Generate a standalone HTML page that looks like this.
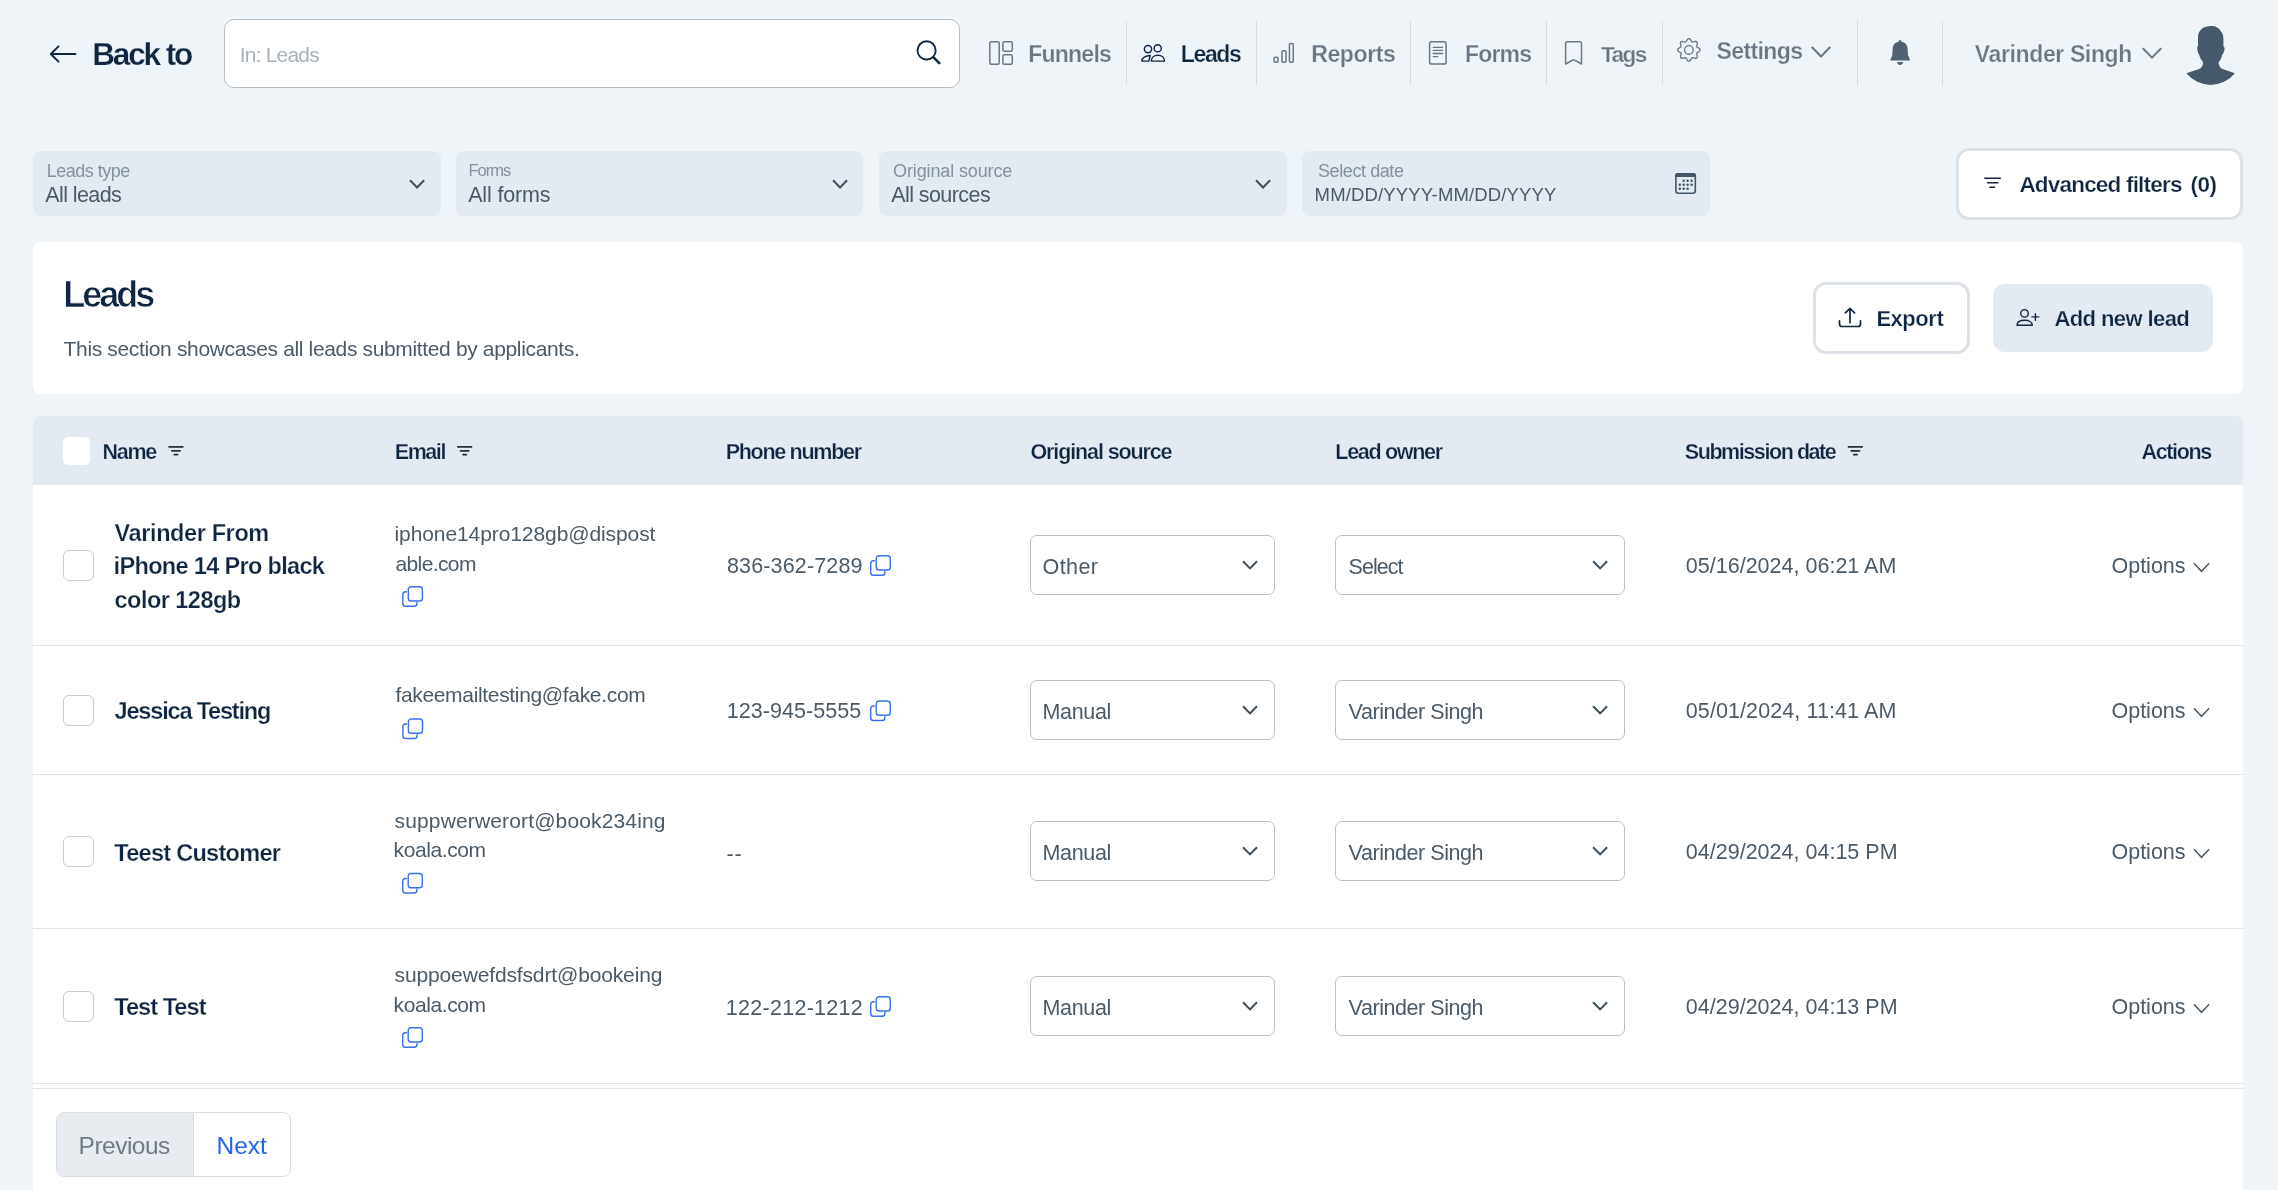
<!DOCTYPE html>
<html><head><meta charset="utf-8"><title>Leads</title>
<style>
html,body{margin:0;padding:0;}
body{width:2278px;height:1190px;overflow:hidden;position:relative;background:#eff4f8;font-family:"Liberation Sans",sans-serif;}
.b{position:absolute;box-sizing:border-box;}
.t{position:absolute;white-space:nowrap;font-family:"Liberation Sans",sans-serif;}
svg.ov{position:absolute;left:0;top:0;}
</style></head><body>
<div class="b" style="left:224px;top:19px;width:736px;height:69px;background:#fff;border:1px solid #b4bcc4;border-radius:10px;"></div>
<div class="b" style="left:1126px;top:21px;width:1px;height:64px;background:#d9dde2;"></div>
<div class="b" style="left:1256px;top:21px;width:1px;height:64px;background:#d9dde2;"></div>
<div class="b" style="left:1410px;top:21px;width:1px;height:64px;background:#d9dde2;"></div>
<div class="b" style="left:1546px;top:21px;width:1px;height:64px;background:#d9dde2;"></div>
<div class="b" style="left:1662px;top:21px;width:1px;height:64px;background:#d9dde2;"></div>
<div class="b" style="left:1857px;top:19px;width:1px;height:67px;background:#d9dde2;"></div>
<div class="b" style="left:1942px;top:21px;width:1px;height:65px;background:#d9dde2;"></div>
<div class="b" style="left:33px;top:151px;width:408px;height:65px;background:#e4eaf1;border-radius:8px;"></div>
<div class="b" style="left:456px;top:151px;width:407px;height:65px;background:#e4eaf1;border-radius:8px;"></div>
<div class="b" style="left:879px;top:151px;width:408px;height:65px;background:#e4eaf1;border-radius:8px;"></div>
<div class="b" style="left:1302px;top:151px;width:408px;height:65px;background:#e4eaf1;border-radius:8px;"></div>
<div class="b" style="left:1956px;top:148px;width:287px;height:72px;background:#fff;border:3px solid #dde2e8;border-radius:13px;"></div>
<div class="b" style="left:33px;top:242px;width:2210px;height:152px;background:#fff;border-radius:8px;"></div>
<div class="b" style="left:1813px;top:282px;width:157px;height:72px;background:#fff;border:3px solid #dde2e8;border-radius:13px;"></div>
<div class="b" style="left:1993px;top:284px;width:220px;height:68px;background:#e4eaf1;border-radius:12px;"></div>
<div class="b" style="left:33px;top:485px;width:2210px;height:705px;background:#fff;"></div>
<div class="b" style="left:33px;top:416px;width:2210px;height:69px;background:#e4eaf1;border-radius:8px 8px 0 0;"></div>
<div class="b" style="left:33px;top:645px;width:2210px;height:1px;background:#dfe4ea;"></div>
<div class="b" style="left:33px;top:774px;width:2210px;height:1px;background:#dfe4ea;"></div>
<div class="b" style="left:33px;top:928px;width:2210px;height:1px;background:#dfe4ea;"></div>
<div class="b" style="left:33px;top:1083px;width:2210px;height:1px;background:#dfe4ea;"></div>
<div class="b" style="left:33px;top:1088px;width:2210px;height:1px;background:#dfe4ea;"></div>
<div class="b" style="left:63px;top:437px;width:27px;height:28px;background:#fff;border-radius:5px;"></div>
<div class="b" style="left:63px;top:550px;width:31px;height:31px;background:#fff;border:1px solid #c8cdd2;border-radius:6px;"></div>
<div class="b" style="left:63px;top:695px;width:31px;height:31px;background:#fff;border:1px solid #c8cdd2;border-radius:6px;"></div>
<div class="b" style="left:63px;top:836px;width:31px;height:31px;background:#fff;border:1px solid #c8cdd2;border-radius:6px;"></div>
<div class="b" style="left:63px;top:991px;width:31px;height:31px;background:#fff;border:1px solid #c8cdd2;border-radius:6px;"></div>
<div class="b" style="left:1030px;top:535px;width:245px;height:60px;background:#fff;border:1px solid #b9c1c8;border-radius:7px;"></div>
<div class="b" style="left:1335px;top:535px;width:290px;height:60px;background:#fff;border:1px solid #b9c1c8;border-radius:7px;"></div>
<div class="b" style="left:1030px;top:680px;width:245px;height:60px;background:#fff;border:1px solid #b9c1c8;border-radius:7px;"></div>
<div class="b" style="left:1335px;top:680px;width:290px;height:60px;background:#fff;border:1px solid #b9c1c8;border-radius:7px;"></div>
<div class="b" style="left:1030px;top:821px;width:245px;height:60px;background:#fff;border:1px solid #b9c1c8;border-radius:7px;"></div>
<div class="b" style="left:1335px;top:821px;width:290px;height:60px;background:#fff;border:1px solid #b9c1c8;border-radius:7px;"></div>
<div class="b" style="left:1030px;top:976px;width:245px;height:60px;background:#fff;border:1px solid #b9c1c8;border-radius:7px;"></div>
<div class="b" style="left:1335px;top:976px;width:290px;height:60px;background:#fff;border:1px solid #b9c1c8;border-radius:7px;"></div>
<div class="b" style="left:56px;top:1112px;width:235px;height:65px;background:#fff;border:1px solid #d9dee3;border-radius:8px;overflow:hidden;"></div>
<div class="b" style="left:57px;top:1113px;width:136px;height:63px;background:#e8ebef;border-radius:7px 0 0 7px;"></div>
<div class="b" style="left:193px;top:1113px;width:1px;height:63px;background:#d9dee3;"></div>
<svg class="ov" width="2278" height="1190" viewBox="0 0 2278 1190">
<path d="M50.8,54 H75.5 M58.5,46.3 L50.8,54 L58.5,61.7" fill="none" stroke="#0f2541" stroke-width="1.9" stroke-linecap="round" stroke-linejoin="round"/>
<circle cx="926.6" cy="50.4" r="9.1" fill="none" stroke="#0f2541" stroke-width="1.9"/>
<path d="M933.3,57.1 L939.3,63.1" stroke="#0f2541" stroke-width="2.6" stroke-linecap="round"/>
<g fill="none" stroke="#6b7682" stroke-width="1.5"><rect x="989.8" y="41.8" width="9.4" height="22.4" rx="1.5"/><rect x="1002.9" y="41.8" width="9.4" height="9.4" rx="1.5"/><rect x="1002.9" y="54.8" width="9.4" height="9.4" rx="1.5"/></g>
<g fill="none" stroke="#0f2541" stroke-width="1.4" stroke-linejoin="round"><circle cx="1148" cy="49.1" r="3.65"/><circle cx="1157.7" cy="48.3" r="3.6"/><path d="M1151.3,61.1 C1151.3,57.5 1154.2,55.2 1157.9,55.2 C1161.6,55.2 1164.5,57.5 1164.5,61.1 Z"/><path d="M1150.2,55.5 C1145.5,55.5 1141.9,58 1141.9,61.1 L1148.8,61.1 Z"/></g>
<g fill="none" stroke="#6b7682" stroke-width="1.5"><rect x="1274.05" y="57.25" width="4" height="5" rx="1"/><rect x="1281.95" y="50.65" width="4" height="11.6" rx="1"/><rect x="1289.45" y="43.45" width="3.8" height="18.8" rx="1"/></g>
<g fill="none" stroke="#6b7682" stroke-width="1.5"><rect x="1429.6" y="41.8" width="16.5" height="22.3" rx="2.2"/></g><g stroke="#6b7682" stroke-width="1.3"><path d="M1432.7,47.3 H1443 M1432.7,50.3 H1443 M1432.7,53.5 H1443 M1432.7,56.6 H1438.3"/></g>
<path d="M1565.6,64 V43.5 C1565.6,42.5 1566.3,41.8 1567.3,41.8 H1579.8 C1580.8,41.8 1581.5,42.5 1581.5,43.5 V64 L1573.55,59.7 Z" fill="none" stroke="#6b7682" stroke-width="1.5" stroke-linejoin="round"/>
<path d="M1688.90,38.65 L1689.10,38.66 L1689.29,38.71 L1689.48,38.78 L1689.67,38.88 L1689.85,39.01 L1690.03,39.16 L1690.20,39.32 L1690.36,39.51 L1690.51,39.71 L1690.66,39.92 L1690.80,40.14 L1690.93,40.35 L1691.05,40.57 L1691.17,40.78 L1691.29,40.99 L1691.40,41.18 L1691.51,41.36 L1691.62,41.52 L1691.74,41.67 L1691.85,41.79 L1691.97,41.89 L1692.10,41.97 L1692.24,42.03 L1692.39,42.06 L1692.55,42.08 L1692.72,42.07 L1692.90,42.05 L1693.09,42.02 L1693.30,41.97 L1693.51,41.91 L1693.74,41.85 L1693.97,41.78 L1694.22,41.72 L1694.46,41.65 L1694.71,41.60 L1694.96,41.55 L1695.21,41.52 L1695.46,41.50 L1695.70,41.50 L1695.93,41.52 L1696.15,41.56 L1696.35,41.63 L1696.54,41.71 L1696.71,41.82 L1696.85,41.95 L1696.98,42.09 L1697.09,42.26 L1697.17,42.45 L1697.24,42.65 L1697.28,42.87 L1697.30,43.10 L1697.30,43.34 L1697.28,43.59 L1697.25,43.84 L1697.20,44.09 L1697.15,44.34 L1697.08,44.58 L1697.02,44.83 L1696.95,45.06 L1696.89,45.29 L1696.83,45.50 L1696.78,45.71 L1696.75,45.90 L1696.73,46.08 L1696.72,46.25 L1696.74,46.41 L1696.77,46.56 L1696.83,46.70 L1696.91,46.83 L1697.01,46.95 L1697.13,47.06 L1697.28,47.18 L1697.44,47.29 L1697.62,47.40 L1697.81,47.51 L1698.02,47.63 L1698.23,47.75 L1698.45,47.87 L1698.66,48.00 L1698.88,48.14 L1699.09,48.29 L1699.29,48.44 L1699.48,48.60 L1699.64,48.77 L1699.79,48.95 L1699.92,49.13 L1700.02,49.32 L1700.09,49.51 L1700.14,49.70 L1700.15,49.90 L1700.14,50.10 L1700.09,50.29 L1700.02,50.48 L1699.92,50.67 L1699.79,50.85 L1699.64,51.03 L1699.48,51.20 L1699.29,51.36 L1699.09,51.51 L1698.88,51.66 L1698.66,51.80 L1698.45,51.93 L1698.23,52.05 L1698.02,52.17 L1697.81,52.29 L1697.62,52.40 L1697.44,52.51 L1697.28,52.62 L1697.13,52.74 L1697.01,52.85 L1696.91,52.97 L1696.83,53.10 L1696.77,53.24 L1696.74,53.39 L1696.72,53.55 L1696.73,53.72 L1696.75,53.90 L1696.78,54.09 L1696.83,54.30 L1696.89,54.51 L1696.95,54.74 L1697.02,54.97 L1697.08,55.22 L1697.15,55.46 L1697.20,55.71 L1697.25,55.96 L1697.28,56.21 L1697.30,56.46 L1697.30,56.70 L1697.28,56.93 L1697.24,57.15 L1697.17,57.35 L1697.09,57.54 L1696.98,57.71 L1696.85,57.85 L1696.71,57.98 L1696.54,58.09 L1696.35,58.17 L1696.15,58.24 L1695.93,58.28 L1695.70,58.30 L1695.46,58.30 L1695.21,58.28 L1694.96,58.25 L1694.71,58.20 L1694.46,58.15 L1694.22,58.08 L1693.97,58.02 L1693.74,57.95 L1693.51,57.89 L1693.30,57.83 L1693.09,57.78 L1692.90,57.75 L1692.72,57.73 L1692.55,57.72 L1692.39,57.74 L1692.24,57.77 L1692.10,57.83 L1691.97,57.91 L1691.85,58.01 L1691.74,58.13 L1691.62,58.28 L1691.51,58.44 L1691.40,58.62 L1691.29,58.81 L1691.17,59.02 L1691.05,59.23 L1690.93,59.45 L1690.80,59.66 L1690.66,59.88 L1690.51,60.09 L1690.36,60.29 L1690.20,60.48 L1690.03,60.64 L1689.85,60.79 L1689.67,60.92 L1689.48,61.02 L1689.29,61.09 L1689.10,61.14 L1688.90,61.15 L1688.70,61.14 L1688.51,61.09 L1688.32,61.02 L1688.13,60.92 L1687.95,60.79 L1687.77,60.64 L1687.60,60.48 L1687.44,60.29 L1687.29,60.09 L1687.14,59.88 L1687.00,59.66 L1686.87,59.45 L1686.75,59.23 L1686.63,59.02 L1686.51,58.81 L1686.40,58.62 L1686.29,58.44 L1686.18,58.28 L1686.06,58.13 L1685.95,58.01 L1685.83,57.91 L1685.70,57.83 L1685.56,57.77 L1685.41,57.74 L1685.25,57.72 L1685.08,57.73 L1684.90,57.75 L1684.71,57.78 L1684.50,57.83 L1684.29,57.89 L1684.06,57.95 L1683.83,58.02 L1683.58,58.08 L1683.34,58.15 L1683.09,58.20 L1682.84,58.25 L1682.59,58.28 L1682.34,58.30 L1682.10,58.30 L1681.87,58.28 L1681.65,58.24 L1681.45,58.17 L1681.26,58.09 L1681.09,57.98 L1680.95,57.85 L1680.82,57.71 L1680.71,57.54 L1680.63,57.35 L1680.56,57.15 L1680.52,56.93 L1680.50,56.70 L1680.50,56.46 L1680.52,56.21 L1680.55,55.96 L1680.60,55.71 L1680.65,55.46 L1680.72,55.22 L1680.78,54.97 L1680.85,54.74 L1680.91,54.51 L1680.97,54.30 L1681.02,54.09 L1681.05,53.90 L1681.07,53.72 L1681.08,53.55 L1681.06,53.39 L1681.03,53.24 L1680.97,53.10 L1680.89,52.97 L1680.79,52.85 L1680.67,52.74 L1680.52,52.62 L1680.36,52.51 L1680.18,52.40 L1679.99,52.29 L1679.78,52.17 L1679.57,52.05 L1679.35,51.93 L1679.14,51.80 L1678.92,51.66 L1678.71,51.51 L1678.51,51.36 L1678.32,51.20 L1678.16,51.03 L1678.01,50.85 L1677.88,50.67 L1677.78,50.48 L1677.71,50.29 L1677.66,50.10 L1677.65,49.90 L1677.66,49.70 L1677.71,49.51 L1677.78,49.32 L1677.88,49.13 L1678.01,48.95 L1678.16,48.77 L1678.32,48.60 L1678.51,48.44 L1678.71,48.29 L1678.92,48.14 L1679.14,48.00 L1679.35,47.87 L1679.57,47.75 L1679.78,47.63 L1679.99,47.51 L1680.18,47.40 L1680.36,47.29 L1680.52,47.18 L1680.67,47.06 L1680.79,46.95 L1680.89,46.83 L1680.97,46.70 L1681.03,46.56 L1681.06,46.41 L1681.08,46.25 L1681.07,46.08 L1681.05,45.90 L1681.02,45.71 L1680.97,45.50 L1680.91,45.29 L1680.85,45.06 L1680.78,44.83 L1680.72,44.58 L1680.65,44.34 L1680.60,44.09 L1680.55,43.84 L1680.52,43.59 L1680.50,43.34 L1680.50,43.10 L1680.52,42.87 L1680.56,42.65 L1680.63,42.45 L1680.71,42.26 L1680.82,42.09 L1680.95,41.95 L1681.09,41.82 L1681.26,41.71 L1681.45,41.63 L1681.65,41.56 L1681.87,41.52 L1682.10,41.50 L1682.34,41.50 L1682.59,41.52 L1682.84,41.55 L1683.09,41.60 L1683.34,41.65 L1683.58,41.72 L1683.83,41.78 L1684.06,41.85 L1684.29,41.91 L1684.50,41.97 L1684.71,42.02 L1684.90,42.05 L1685.08,42.07 L1685.25,42.08 L1685.41,42.06 L1685.56,42.03 L1685.70,41.97 L1685.83,41.89 L1685.95,41.79 L1686.06,41.67 L1686.18,41.52 L1686.29,41.36 L1686.40,41.18 L1686.51,40.99 L1686.63,40.78 L1686.75,40.57 L1686.87,40.35 L1687.00,40.14 L1687.14,39.92 L1687.29,39.71 L1687.44,39.51 L1687.60,39.32 L1687.77,39.16 L1687.95,39.01 L1688.13,38.88 L1688.32,38.78 L1688.51,38.71 L1688.70,38.66 L1688.90,38.65 Z" fill="none" stroke="#6b7682" stroke-width="1.35"/>
<circle cx="1688.9" cy="49.9" r="4.3" fill="none" stroke="#6b7682" stroke-width="1.35"/>
<path d="M1811.8,47 L1821,56.5 L1830.2,47" fill="none" stroke="#6b7682" stroke-width="2"/>
<g transform="translate(1884,36)" fill="#526170"><path d="M6.2,24.5 H26.2 L24,19 L23.5,11.5 C22.8,7.8 20,6 17.3,5.5 L16.9,4.3 C16.6,3.8 15.6,3.8 15.3,4.3 L14.9,5.5 C12.2,6 9.4,7.8 8.7,11.5 L8.3,19 Z"/><path d="M13.2,26 H19.1 C19.1,27.8 17.8,28.9 16.15,28.9 C14.5,28.9 13.2,27.8 13.2,26 Z"/></g>
<path d="M2142.8,48.3 L2152,57.6 L2161.2,48.3" fill="none" stroke="#6b7682" stroke-width="2"/>
<g transform="translate(2174,18)"><circle cx="36.4" cy="35.5" r="31.4" fill="none" stroke="#f5f7fa" stroke-width="1"/><path fill="#46596a" d="M12.4,55.3 L25.8,50.7 C28,49.5 29,46.5 29.2,44.2 C26.5,41.5 25.5,38.5 25.3,36.8 C23.8,35.5 23,31.5 23.3,29 C23.5,28.5 24,28 24,27 L24,19 C24,12 30,8.1 37,8.1 C42,8.1 45,10 47,13.5 C49,15.5 49.4,18 49.4,21 L49.4,28.5 C50.5,29 50.8,30 50.5,31.5 C50,34 49,36.5 48,36.9 C47.5,40 46.5,42 44.5,44.2 C44.7,46.5 45.8,49.5 47.9,50.7 L60.9,55.3 A31.1,31.1 0 0 1 12.4,55.3 Z"/></g>
<path d="M410,180.2 L417.05,187.5 L424.1,180.2" fill="none" stroke="#3f4f5c" stroke-width="2"/>
<path d="M833,180.2 L840.05,187.5 L847.1,180.2" fill="none" stroke="#3f4f5c" stroke-width="2"/>
<path d="M1256,180.2 L1263.05,187.5 L1270.1,180.2" fill="none" stroke="#3f4f5c" stroke-width="2"/>
<g fill="#46566a"><path d="M1675.1,176.9 V175.5 C1675.1,174.1 1676.2,173 1677.6,173 H1693.6 C1695,173 1696.1,174.1 1696.1,175.5 V176.9 Z"/>
<circle cx="1683.7" cy="180.8" r="1.25"/>
<circle cx="1687.6" cy="180.8" r="1.25"/>
<circle cx="1691.6" cy="180.8" r="1.25"/>
<circle cx="1679.8" cy="184.8" r="1.25"/>
<circle cx="1683.7" cy="184.8" r="1.25"/>
<circle cx="1687.6" cy="184.8" r="1.25"/>
<circle cx="1691.6" cy="184.8" r="1.25"/>
<circle cx="1679.8" cy="188.7" r="1.25"/>
<circle cx="1683.7" cy="188.7" r="1.25"/>
<circle cx="1687.6" cy="188.7" r="1.25"/>
</g>
<rect x="1675.9" y="173.8" width="19.4" height="19.4" rx="2.5" fill="none" stroke="#46566a" stroke-width="1.6"/>
<path d="M1984.8,178.2 H2000.3 M1987.6,182.8 H1997.8 M1990,187.3 H1994.6" stroke="#0f2541" stroke-width="1.6" stroke-linecap="round"/>
<g transform="translate(1834,302)" fill="none" stroke="#0f2541" stroke-width="1.7" stroke-linecap="round" stroke-linejoin="round"><path d="M11.3,10.8 L16,6.5 L20.6,10.8 M16,7 V20.7 M5.5,18.8 V22 C5.5,23.4 6.6,24.5 8,24.5 H24 C25.4,24.5 26.5,23.4 26.5,22 V18.8"/></g>
<g transform="translate(2012,302)" fill="none" stroke="#0f2541" stroke-width="1.4" stroke-linejoin="round"><circle cx="12.5" cy="11.4" r="3.75"/><path d="M5,23.2 C5,20 8.3,18.2 12.6,18.2 C16.9,18.2 20.3,20 20.3,23.2 Z"/><path d="M20,14.9 H26.8 M23.4,11.8 V18.3" stroke-linecap="round"/></g>
<path d="M169.1,446.85 H182.8 M171.9,450.8 H180.0 M174.4,454.7 H177.6" stroke="#2a2f33" stroke-width="1.8" stroke-linecap="round"/>
<path d="M457.8,446.85 H471.5 M460.6,450.8 H468.7 M463.1,454.7 H466.3" stroke="#2a2f33" stroke-width="1.8" stroke-linecap="round"/>
<path d="M1848.5,446.85 H1862.2 M1851.3,450.8 H1859.4 M1853.8,454.7 H1857.0" stroke="#2a2f33" stroke-width="1.8" stroke-linecap="round"/>
<g transform="translate(870,555)" fill="none" stroke="#3a70ee" stroke-width="1.4"><rect x="6.2" y="0.7" width="14.1" height="14.3" rx="2.8"/><path d="M4.4,5.7 H3.5 C1.95,5.7 0.7,6.95 0.7,8.5 V17.4 C0.7,18.95 1.95,20.2 3.5,20.2 H12.1 C13.65,20.2 14.9,18.95 14.9,17.4 V16.5" stroke-linecap="round"/></g>
<g transform="translate(870,700.3)" fill="none" stroke="#3a70ee" stroke-width="1.4"><rect x="6.2" y="0.7" width="14.1" height="14.3" rx="2.8"/><path d="M4.4,5.7 H3.5 C1.95,5.7 0.7,6.95 0.7,8.5 V17.4 C0.7,18.95 1.95,20.2 3.5,20.2 H12.1 C13.65,20.2 14.9,18.95 14.9,17.4 V16.5" stroke-linecap="round"/></g>
<g transform="translate(870,996)" fill="none" stroke="#3a70ee" stroke-width="1.4"><rect x="6.2" y="0.7" width="14.1" height="14.3" rx="2.8"/><path d="M4.4,5.7 H3.5 C1.95,5.7 0.7,6.95 0.7,8.5 V17.4 C0.7,18.95 1.95,20.2 3.5,20.2 H12.1 C13.65,20.2 14.9,18.95 14.9,17.4 V16.5" stroke-linecap="round"/></g>
<g transform="translate(402.1,586)" fill="none" stroke="#3a70ee" stroke-width="1.4"><rect x="6.2" y="0.7" width="14.1" height="14.3" rx="2.8"/><path d="M4.4,5.7 H3.5 C1.95,5.7 0.7,6.95 0.7,8.5 V17.4 C0.7,18.95 1.95,20.2 3.5,20.2 H12.1 C13.65,20.2 14.9,18.95 14.9,17.4 V16.5" stroke-linecap="round"/></g>
<g transform="translate(402.2,718.3)" fill="none" stroke="#3a70ee" stroke-width="1.4"><rect x="6.2" y="0.7" width="14.1" height="14.3" rx="2.8"/><path d="M4.4,5.7 H3.5 C1.95,5.7 0.7,6.95 0.7,8.5 V17.4 C0.7,18.95 1.95,20.2 3.5,20.2 H12.1 C13.65,20.2 14.9,18.95 14.9,17.4 V16.5" stroke-linecap="round"/></g>
<g transform="translate(402,872.8)" fill="none" stroke="#3a70ee" stroke-width="1.4"><rect x="6.2" y="0.7" width="14.1" height="14.3" rx="2.8"/><path d="M4.4,5.7 H3.5 C1.95,5.7 0.7,6.95 0.7,8.5 V17.4 C0.7,18.95 1.95,20.2 3.5,20.2 H12.1 C13.65,20.2 14.9,18.95 14.9,17.4 V16.5" stroke-linecap="round"/></g>
<g transform="translate(402,1027)" fill="none" stroke="#3a70ee" stroke-width="1.4"><rect x="6.2" y="0.7" width="14.1" height="14.3" rx="2.8"/><path d="M4.4,5.7 H3.5 C1.95,5.7 0.7,6.95 0.7,8.5 V17.4 C0.7,18.95 1.95,20.2 3.5,20.2 H12.1 C13.65,20.2 14.9,18.95 14.9,17.4 V16.5" stroke-linecap="round"/></g>
<path d="M1243,561.2 L1250,568.4 L1257,561.2" fill="none" stroke="#3f4f5c" stroke-width="2"/>
<path d="M1593.1,561.2 L1600.1,568.4 L1607.1,561.2" fill="none" stroke="#3f4f5c" stroke-width="2"/>
<path d="M2193.9,563.3 L2201.5,571.3 L2209.1,563.3" fill="none" stroke="#4b5a67" stroke-width="1.5"/>
<path d="M1243,706.2 L1250,713.4 L1257,706.2" fill="none" stroke="#3f4f5c" stroke-width="2"/>
<path d="M1593.1,706.2 L1600.1,713.4 L1607.1,706.2" fill="none" stroke="#3f4f5c" stroke-width="2"/>
<path d="M2193.9,708.3 L2201.5,716.3 L2209.1,708.3" fill="none" stroke="#4b5a67" stroke-width="1.5"/>
<path d="M1243,847.2 L1250,854.4 L1257,847.2" fill="none" stroke="#3f4f5c" stroke-width="2"/>
<path d="M1593.1,847.2 L1600.1,854.4 L1607.1,847.2" fill="none" stroke="#3f4f5c" stroke-width="2"/>
<path d="M2193.9,849.3 L2201.5,857.3 L2209.1,849.3" fill="none" stroke="#4b5a67" stroke-width="1.5"/>
<path d="M1243,1002.2 L1250,1009.4 L1257,1002.2" fill="none" stroke="#3f4f5c" stroke-width="2"/>
<path d="M1593.1,1002.2 L1600.1,1009.4 L1607.1,1002.2" fill="none" stroke="#3f4f5c" stroke-width="2"/>
<path d="M2193.9,1004.3 L2201.5,1012.3 L2209.1,1004.3" fill="none" stroke="#4b5a67" stroke-width="1.5"/>
</svg>
<div style="position:absolute;left:0;top:0;width:2278px;height:1190px;will-change:transform;">
<span class="t" id="t0" style="left:92.20px;top:39.00px;font-size:31.5px;line-height:31.5px;color:#0f2541;letter-spacing:-2.12px;font-weight:700;-webkit-text-stroke:0.25px #eff4f8;">Back to</span>
<span class="t" id="t1" style="left:239.80px;top:44.01px;font-size:21px;line-height:21px;color:#a9b2ba;letter-spacing:-0.81px;">In: Leads</span>
<span class="t" id="t2" style="left:1028.20px;top:43.01px;font-size:23px;line-height:23px;color:#6b7682;letter-spacing:-0.76px;font-weight:700;-webkit-text-stroke:0.25px #eff4f8;">Funnels</span>
<span class="t" id="t3" style="left:1180.80px;top:43.01px;font-size:23px;line-height:23px;color:#0f2541;letter-spacing:-1.37px;font-weight:700;-webkit-text-stroke:0.25px #eff4f8;">Leads</span>
<span class="t" id="t4" style="left:1311.20px;top:43.01px;font-size:23px;line-height:23px;color:#6b7682;letter-spacing:-0.38px;font-weight:700;-webkit-text-stroke:0.25px #eff4f8;">Reports</span>
<span class="t" id="t5" style="left:1465.00px;top:43.01px;font-size:23px;line-height:23px;color:#6b7682;letter-spacing:-0.82px;font-weight:700;-webkit-text-stroke:0.25px #eff4f8;">Forms</span>
<span class="t" id="t6" style="left:1601.00px;top:44.00px;font-size:22.5px;line-height:22.5px;color:#6b7682;letter-spacing:-1.54px;font-weight:700;-webkit-text-stroke:0.25px #eff4f8;">Tags</span>
<span class="t" id="t7" style="left:1716.60px;top:40.01px;font-size:23px;line-height:23px;color:#6b7682;letter-spacing:-0.62px;font-weight:700;-webkit-text-stroke:0.25px #eff4f8;">Settings</span>
<span class="t" id="t8" style="left:1974.80px;top:43.01px;font-size:23px;line-height:23px;color:#6b7682;letter-spacing:-0.37px;font-weight:700;-webkit-text-stroke:0.25px #eff4f8;">Varinder Singh</span>
<span class="t" id="t9" style="left:46.70px;top:162.01px;font-size:18px;line-height:18px;color:#84929e;letter-spacing:-0.51px;">Leads type</span>
<span class="t" id="t10" style="left:468.40px;top:162.02px;font-size:16.5px;line-height:16.5px;color:#84929e;letter-spacing:-0.97px;">Forms</span>
<span class="t" id="t11" style="left:893.00px;top:162.01px;font-size:18px;line-height:18px;color:#84929e;letter-spacing:-0.12px;">Original source</span>
<span class="t" id="t12" style="left:45.20px;top:185.01px;font-size:21.5px;line-height:21.5px;color:#4b5a67;letter-spacing:-0.58px;">All leads</span>
<span class="t" id="t13" style="left:468.20px;top:185.01px;font-size:21.5px;line-height:21.5px;color:#4b5a67;letter-spacing:-0.16px;">All forms</span>
<span class="t" id="t14" style="left:891.20px;top:185.01px;font-size:21.5px;line-height:21.5px;color:#4b5a67;letter-spacing:-0.57px;">All sources</span>
<span class="t" id="t15" style="left:1318.00px;top:162.01px;font-size:18px;line-height:18px;color:#84929e;letter-spacing:-0.41px;">Select date</span>
<span class="t" id="t16" style="left:1314.60px;top:186.01px;font-size:18.5px;line-height:18.5px;color:#4b5a67;letter-spacing:0.15px;">MM/DD/YYYY-MM/DD/YYYY</span>
<span class="t" id="t17" style="left:2019.40px;top:174.01px;font-size:22.5px;line-height:22.5px;color:#0f2541;letter-spacing:-0.80px;font-weight:700;-webkit-text-stroke:0.25px #ffffff;">Advanced filters</span>
<span class="t" id="t18" style="left:2190.60px;top:174.01px;font-size:22.5px;line-height:22.5px;color:#0f2541;letter-spacing:-0.60px;font-weight:700;-webkit-text-stroke:0.25px #ffffff;">(0)</span>
<span class="t" id="t19" style="left:63.30px;top:277.01px;font-size:36px;line-height:36px;color:#0f2541;letter-spacing:-3.03px;font-weight:700;-webkit-text-stroke:0.7px #ffffff;">Leads</span>
<span class="t" id="t20" style="left:63.60px;top:338.01px;font-size:21px;line-height:21px;color:#4b5a67;letter-spacing:-0.35px;">This section showcases all leads submitted by applicants.</span>
<span class="t" id="t21" style="left:1876.40px;top:308.01px;font-size:22px;line-height:22px;color:#0f2541;letter-spacing:-0.47px;font-weight:700;-webkit-text-stroke:0.25px #ffffff;">Export</span>
<span class="t" id="t22" style="left:2054.40px;top:308.01px;font-size:22px;line-height:22px;color:#0f2541;letter-spacing:-0.58px;font-weight:700;-webkit-text-stroke:0.25px #e4eaf1;">Add new lead</span>
<span class="t" id="t23" style="left:102.40px;top:442.02px;font-size:21.5px;line-height:21.5px;color:#0f2541;letter-spacing:-1.23px;font-weight:700;-webkit-text-stroke:0.25px #e4eaf1;">Name</span>
<span class="t" id="t24" style="left:394.80px;top:442.02px;font-size:21.5px;line-height:21.5px;color:#0f2541;letter-spacing:-1.45px;font-weight:700;-webkit-text-stroke:0.25px #e4eaf1;">Email</span>
<span class="t" id="t25" style="left:725.70px;top:442.02px;font-size:21.5px;line-height:21.5px;color:#0f2541;letter-spacing:-1.29px;font-weight:700;-webkit-text-stroke:0.25px #e4eaf1;">Phone number</span>
<span class="t" id="t26" style="left:1030.50px;top:442.02px;font-size:21.5px;line-height:21.5px;color:#0f2541;letter-spacing:-1.12px;font-weight:700;-webkit-text-stroke:0.25px #e4eaf1;">Original source</span>
<span class="t" id="t27" style="left:1335.30px;top:442.02px;font-size:21.5px;line-height:21.5px;color:#0f2541;letter-spacing:-1.29px;font-weight:700;-webkit-text-stroke:0.25px #e4eaf1;">Lead owner</span>
<span class="t" id="t28" style="left:1684.80px;top:442.02px;font-size:21.5px;line-height:21.5px;color:#0f2541;letter-spacing:-1.43px;font-weight:700;-webkit-text-stroke:0.25px #e4eaf1;">Submission date</span>
<span class="t" id="t29" style="left:2141.50px;top:442.02px;font-size:21.5px;line-height:21.5px;color:#0f2541;letter-spacing:-1.35px;font-weight:700;-webkit-text-stroke:0.25px #e4eaf1;">Actions</span>
<span class="t" id="t30" style="left:114.60px;top:522.01px;font-size:23.5px;line-height:23.5px;color:#0f2541;letter-spacing:-0.39px;font-weight:700;-webkit-text-stroke:0.25px #ffffff;">Varinder From</span>
<span class="t" id="t31" style="left:113.60px;top:555.02px;font-size:23.5px;line-height:23.5px;color:#0f2541;letter-spacing:-0.67px;font-weight:700;-webkit-text-stroke:0.25px #ffffff;">iPhone 14 Pro black</span>
<span class="t" id="t32" style="left:114.60px;top:589.01px;font-size:23.5px;line-height:23.5px;color:#0f2541;letter-spacing:-0.54px;font-weight:700;-webkit-text-stroke:0.25px #ffffff;">color 128gb</span>
<span class="t" id="t33" style="left:114.60px;top:700.02px;font-size:23.5px;line-height:23.5px;color:#0f2541;letter-spacing:-1.18px;font-weight:700;-webkit-text-stroke:0.25px #ffffff;">Jessica Testing</span>
<span class="t" id="t34" style="left:114.30px;top:842.01px;font-size:23.5px;line-height:23.5px;color:#0f2541;letter-spacing:-0.71px;font-weight:700;-webkit-text-stroke:0.25px #ffffff;">Teest Customer</span>
<span class="t" id="t35" style="left:114.30px;top:996.01px;font-size:23.5px;line-height:23.5px;color:#0f2541;letter-spacing:-0.94px;font-weight:700;-webkit-text-stroke:0.25px #ffffff;">Test Test</span>
<span class="t" id="t36" style="left:394.50px;top:523.01px;font-size:21px;line-height:21px;color:#4b5a67;letter-spacing:-0.09px;">iphone14pro128gb@dispost</span>
<span class="t" id="t37" style="left:395.50px;top:553.01px;font-size:21px;line-height:21px;color:#4b5a67;letter-spacing:-0.62px;">able.com</span>
<span class="t" id="t38" style="left:395.40px;top:684.00px;font-size:21px;line-height:21px;color:#4b5a67;letter-spacing:-0.33px;">fakeemailtesting@fake.com</span>
<span class="t" id="t39" style="left:394.60px;top:810.01px;font-size:21px;line-height:21px;color:#4b5a67;letter-spacing:0.14px;">suppwerwerort@book234ing</span>
<span class="t" id="t40" style="left:393.60px;top:839.01px;font-size:21px;line-height:21px;color:#4b5a67;letter-spacing:-0.40px;">koala.com</span>
<span class="t" id="t41" style="left:394.60px;top:964.01px;font-size:21px;line-height:21px;color:#4b5a67;letter-spacing:-0.14px;">suppoewefdsfsdrt@bookeing</span>
<span class="t" id="t42" style="left:393.60px;top:994.00px;font-size:21px;line-height:21px;color:#4b5a67;letter-spacing:-0.40px;">koala.com</span>
<span class="t" id="t43" style="left:726.90px;top:556.00px;font-size:21.5px;line-height:21.5px;color:#4b5a67;letter-spacing:0.16px;">836-362-7289</span>
<span class="t" id="t44" style="left:726.70px;top:701.00px;font-size:21.5px;line-height:21.5px;color:#4b5a67;letter-spacing:0.05px;">123-945-5555</span>
<span class="t" id="t45" style="left:726.50px;top:844.01px;font-size:21.5px;line-height:21.5px;color:#4b5a67;letter-spacing:0.94px;">--</span>
<span class="t" id="t46" style="left:725.80px;top:998.01px;font-size:21.5px;line-height:21.5px;color:#4b5a67;letter-spacing:0.28px;">122-212-1212</span>
<span class="t" id="t47" style="left:1042.50px;top:557.02px;font-size:21.5px;line-height:21.5px;color:#4b5a67;letter-spacing:0.42px;">Other</span>
<span class="t" id="t48" style="left:1348.60px;top:557.02px;font-size:21.5px;line-height:21.5px;color:#4b5a67;letter-spacing:-0.98px;">Select</span>
<span class="t" id="t49" style="left:1685.80px;top:556.00px;font-size:21.5px;line-height:21.5px;color:#4b5a67;letter-spacing:0.01px;">05/16/2024, 06:21 AM</span>
<span class="t" id="t50" style="left:2111.50px;top:556.00px;font-size:21.5px;line-height:21.5px;color:#4b5a67;letter-spacing:-0.01px;">Options</span>
<span class="t" id="t51" style="left:1042.50px;top:702.02px;font-size:21.5px;line-height:21.5px;color:#4b5a67;letter-spacing:-0.33px;">Manual</span>
<span class="t" id="t52" style="left:1348.60px;top:702.02px;font-size:21.5px;line-height:21.5px;color:#4b5a67;letter-spacing:-0.44px;">Varinder Singh</span>
<span class="t" id="t53" style="left:1685.80px;top:701.00px;font-size:21.5px;line-height:21.5px;color:#4b5a67;letter-spacing:0.09px;">05/01/2024, 11:41 AM</span>
<span class="t" id="t54" style="left:2111.50px;top:701.00px;font-size:21.5px;line-height:21.5px;color:#4b5a67;letter-spacing:-0.01px;">Options</span>
<span class="t" id="t55" style="left:1042.50px;top:843.02px;font-size:21.5px;line-height:21.5px;color:#4b5a67;letter-spacing:-0.33px;">Manual</span>
<span class="t" id="t56" style="left:1348.60px;top:843.02px;font-size:21.5px;line-height:21.5px;color:#4b5a67;letter-spacing:-0.44px;">Varinder Singh</span>
<span class="t" id="t57" style="left:1685.80px;top:842.00px;font-size:21.5px;line-height:21.5px;color:#4b5a67;letter-spacing:0.01px;">04/29/2024, 04:15 PM</span>
<span class="t" id="t58" style="left:2111.50px;top:842.00px;font-size:21.5px;line-height:21.5px;color:#4b5a67;letter-spacing:-0.01px;">Options</span>
<span class="t" id="t59" style="left:1042.50px;top:998.02px;font-size:21.5px;line-height:21.5px;color:#4b5a67;letter-spacing:-0.33px;">Manual</span>
<span class="t" id="t60" style="left:1348.60px;top:998.02px;font-size:21.5px;line-height:21.5px;color:#4b5a67;letter-spacing:-0.44px;">Varinder Singh</span>
<span class="t" id="t61" style="left:1685.80px;top:997.00px;font-size:21.5px;line-height:21.5px;color:#4b5a67;letter-spacing:0.01px;">04/29/2024, 04:13 PM</span>
<span class="t" id="t62" style="left:2111.50px;top:997.00px;font-size:21.5px;line-height:21.5px;color:#4b5a67;letter-spacing:-0.01px;">Options</span>
<span class="t" id="t63" style="left:78.60px;top:1134.00px;font-size:24.5px;line-height:24.5px;color:#6f7c87;letter-spacing:-0.51px;">Previous</span>
<span class="t" id="t64" style="left:216.60px;top:1134.00px;font-size:24.5px;line-height:24.5px;color:#2563eb;letter-spacing:-0.09px;">Next</span>
</div>
</body></html>
